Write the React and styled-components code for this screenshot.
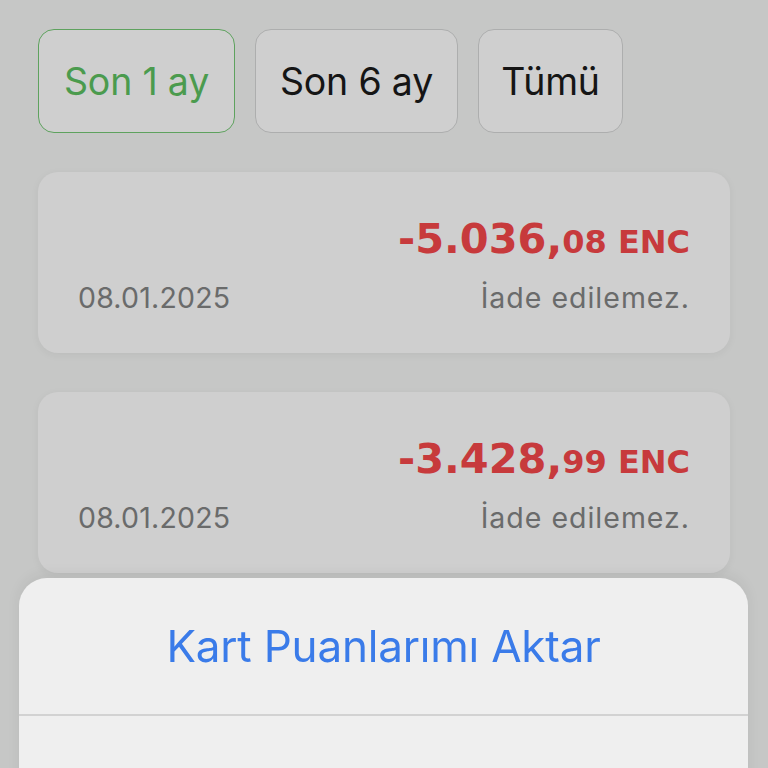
import React from "react";
import styled, { createGlobalStyle } from "styled-components";

const GlobalStyle = createGlobalStyle`
  html, body {
    margin: 0;
    padding: 0;
    background: #c6c7c6;
    font-family: Inter, "Liberation Sans", sans-serif;
    overflow: hidden;
  }
`;

const Page = styled.div`
  width: 768px;
  height: 768px;
  box-sizing: border-box;
  padding: 29px 38px 0 38px;
  display: flex;
  flex-direction: column;
  gap: 39px;
  background: #c6c7c6;
  overflow: hidden;
`;

const FilterRow = styled.div`
  display: flex;
  gap: 20px;
  flex-shrink: 0;
`;

const FilterButton = styled.button`
  height: 104px;
  width: ${(p) => p.w}px;
  box-sizing: border-box;
  border-radius: 16px;
  border: 1.5px solid ${(p) => (p.active ? "#5ea25e" : "#adaeae")};
  background: #cfcfcf;
  color: ${(p) => (p.active ? "#4b9b4e" : "#151515")};
  font-family: Inter, "Liberation Sans", sans-serif;
  font-size: 37.5px;
  font-weight: 400;
  letter-spacing: -0.2px;
  padding: 0;
  display: flex;
  align-items: center;
  justify-content: center;
`;

const Card = styled.div`
  height: 181px;
  flex-shrink: 0;
  box-sizing: border-box;
  border-radius: 20px;
  background: #cfcfcf;
  box-shadow: 0 2px 8px rgba(0, 0, 0, 0.05);
  padding: 0 40px 41px 40px;
  display: flex;
  align-items: flex-end;
  justify-content: space-between;
`;

const DateText = styled.div`
  font-size: 28.5px;
  color: #6a6b6b;
  line-height: 1;
  letter-spacing: 0.2px;
`;

const RightCol = styled.div`
  display: flex;
  flex-direction: column;
  align-items: flex-end;
  gap: 24px;
`;

const Amount = styled.div`
  color: #c73a3c;
  font-family: "DejaVu Sans", "Liberation Sans", sans-serif;
  font-weight: 700;
  font-size: 41.5px;
  line-height: 1;
  white-space: nowrap;
`;

const Small = styled.span`
  font-size: 32px;
`;

const Note = styled.div`
  font-size: 28.5px;
  color: #6a6b6b;
  line-height: 1;
  letter-spacing: 1px;
`;

const Sheet = styled.div`
  position: fixed;
  left: 19px;
  right: 20px;
  top: 578px;
  height: 320px;
  background: #efefef;
  border-radius: 28px 28px 0 0;
  box-shadow: 0 -4px 14px rgba(0, 0, 0, 0.06);
  display: flex;
  flex-direction: column;
`;

const SheetItem = styled.div`
  height: ${(p) => (p.last ? 140 : 138)}px;
  flex-shrink: 0;
  box-sizing: border-box;
  border-bottom: ${(p) => (p.last ? "none" : "2px solid #d2d2d2")};
  display: flex;
  align-items: center;
  justify-content: center;
  color: #3a7be9;
  font-size: 44px;
  letter-spacing: -0.2px;
`;

const filters = [
  { label: "Son 1 ay", w: 197, active: true },
  { label: "Son 6 ay", w: 203 },
  { label: "Tümü", w: 145 },
];

const items = [
  { whole: "-5.036,", cents: "08 ENC", date: "08.01.2025" },
  { whole: "-3.428,", cents: "99 ENC", date: "08.01.2025" },
];

export default function App() {
  return (
    <>
      <GlobalStyle />
      <Page>
        <FilterRow>
          {filters.map((f) => (
            <FilterButton key={f.label} w={f.w} active={f.active}>
              {f.label}
            </FilterButton>
          ))}
        </FilterRow>
        {items.map((it, i) => (
          <Card key={i}>
            <DateText>{it.date}</DateText>
            <RightCol>
              <Amount>
                {it.whole}
                <Small>{it.cents}</Small>
              </Amount>
              <Note>İade edilemez.</Note>
            </RightCol>
          </Card>
        ))}
      </Page>
      <Sheet>
        <SheetItem>Kart Puanlarımı Aktar</SheetItem>
        <SheetItem last>Hediye Puanlarım</SheetItem>
      </Sheet>
    </>
  );
}
